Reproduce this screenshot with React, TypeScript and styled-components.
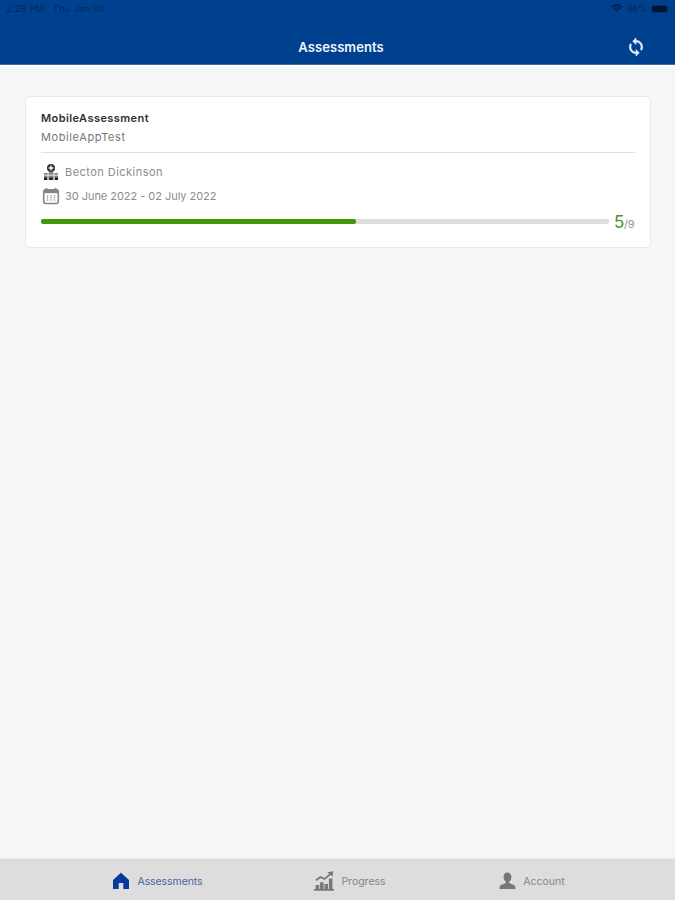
import React from "react";
import styled, { createGlobalStyle } from "styled-components";

const GlobalStyle = createGlobalStyle`
  * { box-sizing: border-box; }
  body { margin: 0; font-family: Inter, "Liberation Sans", sans-serif; }
`;

const Screen = styled.div`
  display: flex;
  flex-direction: column;
  width: 675px;
  height: 900px;
  overflow: hidden;
  background: #f6f6f6;
`;

const Header = styled.header`
  height: 65px;
  flex: none;
  background: #00418f;
  border-bottom: 1px solid #4b67a8;
`;

const StatusBar = styled.div`
  display: grid;
  grid-template-columns: 1fr auto 1fr;
  align-items: center;
  height: 17px;
  padding: 0 5px 0 6px;
  color: #032759;
  font-size: 9px;
  line-height: 17px;
`;

const Clock = styled.div`
  display: flex;
  gap: 9px;
  letter-spacing: 0.35px;
`;

const Dots = styled.div`
  display: flex;
  gap: 5px;
  i { width: 2px; height: 2px; border-radius: 50%; background: #043a7e; }
`;

const Indicators = styled.div`
  display: flex;
  justify-content: flex-end;
  align-items: center;
  gap: 4px;
`;

const TitleBar = styled.div`
  display: grid;
  grid-template-columns: 1fr auto 1fr;
  align-items: center;
  height: 47px;
  padding: 13px 29px 0 36px;
`;

const Title = styled.h1`
  grid-column: 2;
  margin: 0;
  color: #f2f6ff;
  font-size: 13px;
  font-weight: 600;
  line-height: 20px;
  letter-spacing: 0.08px;
`;

const SyncButton = styled.button`
  justify-self: end;
  display: flex;
  padding: 0;
  border: 0;
  background: none;
  color: #e8f0fc;
`;

const Main = styled.main`
  flex: 1;
  padding: 29px 24px 0 25px;
  border-top: 2px solid #fdfdfe;
`;

const Card = styled.article`
  height: 152px;
  padding: 12px 15px 0;
  border: 1px solid #e9e9e9;
  border-radius: 4px;
  background: #fff;
`;

const CardTitle = styled.h2`
  margin: 0;
  color: #303030;
  font-size: 11px;
  font-weight: 600;
  line-height: 18px;
  letter-spacing: 0.42px;
`;

const Subtitle = styled.div`
  height: 26px;
  padding-top: 1px;
  margin-bottom: 7px;
  border-bottom: 1px solid #dfdfdf;
  color: #777;
  font-size: 11px;
  line-height: 18px;
  letter-spacing: 0.6px;
`;

const Detail = styled.div<{ $spacing: number }>`
  display: flex;
  align-items: center;
  gap: 5px;
  height: 24px;
  padding-left: 1px;
  color: #8c8c8c;
  font-size: 11px;
  letter-spacing: ${(p) => p.$spacing}px;
`;

const ProgressRow = styled.div`
  display: flex;
  align-items: center;
  gap: 5px;
  height: 27px;
`;

const Track = styled.div`
  flex: none;
  width: 568px;
  height: 5px;
  border-radius: 2px;
  background: #dedede;
`;

const Fill = styled.div`
  width: 55.5%;
  height: 100%;
  border-radius: 2px;
  background: #46960d;
`;

const Score = styled.div`
  display: flex;
  align-items: baseline;
  padding-top: 2px;
  color: #929292;
  font-size: 11px;
  line-height: 20px;
  letter-spacing: -0.3px;
  b { color: #4b9021; font-size: 17px; font-weight: 400; }
`;

const TabBar = styled.nav`
  display: flex;
  flex: none;
  height: 42px;
  padding: 2px 0 0 66px;
  border-top: 1px solid #e8e8e8;
  background: #dddddd;
`;

const Tab = styled.a<{ $active?: boolean; $width: number }>`
  display: flex;
  align-items: center;
  justify-content: center;
  gap: 7px;
  width: ${(p) => p.$width}px;
  color: ${(p) => (p.$active ? "#5260a0" : "#858585")};
  font-size: 10.5px;
  letter-spacing: ${(p) => (p.$active ? -0.08 : 0)}px;
  span { padding-top: 2px; }
  svg { color: ${(p) => (p.$active ? "#073b9b" : "#777")}; }
`;

const WifiIcon = () => (
  <svg width="12" height="9" viewBox="0 0 12 9" fill="none" stroke="#032350" strokeWidth="1.8">
    <path d="M.7 3.2Q6-1.3 11.3 3.2M2.8 5.2Q6 2.6 9.2 5.2" />
    <path d="M4.3 6.4Q6 5.1 7.7 6.4L6 8.3Z" fill="#032350" stroke="none" />
  </svg>
);

const BatteryIcon = () => (
  <svg width="19" height="8" viewBox="0 0 19 8">
    <rect x=".5" y=".5" width="16" height="7" rx="2" fill="#001333" stroke="#07336d" />
    <path d="M17.5 2.5q1.2 1.5 0 3" fill="#032759" />
  </svg>
);

const SyncIcon = () => (
  <svg width="20" height="20" viewBox="0 0 24 24" fill="currentColor">
    <path d="M12 4V1L8 5l4 4V6c3.31 0 6 2.69 6 6 0 1.01-.25 1.97-.7 2.8l1.46 1.46A7.93 7.93 0 0 0 20 12c0-4.42-3.58-8-8-8zm0 14c-3.31 0-6-2.69-6-6 0-1.01.25-1.97.7-2.8L5.24 7.74A7.93 7.93 0 0 0 4 12c0 4.42 3.58 8 8 8v3l4-4-4-4v3z" stroke="currentColor" strokeWidth=".6" />
  </svg>
);

const HospitalIcon = () => (
  <svg width="18" height="18" viewBox="0 0 18 18">
    <circle cx="9" cy="5" r="4" fill="#303030" />
    <path d="M9 2.6v4.8M6.6 5h4.8" stroke="#fff" strokeWidth="1.3" />
    <path d="M2 10h5V9h4v1h5v7H2z" fill="#858585" />
    <path d="M2 12.2h14M6 10v7M12 10v7" stroke="#eee" strokeWidth=".9" />
    <path d="M2 14.5h3V17H2zM7.3 14.5h3.4V17H7.3zM13 14.5h3V17h-3z" fill="#202020" />
  </svg>
);

const CalendarIcon = () => (
  <svg width="18" height="18" viewBox="0 0 18 18" fill="none" stroke="#858585">
    <rect x="1.7" y="2.8" width="14.6" height="13.7" rx="2" strokeWidth="1.6" />
    <path d="M2 4.5h14" strokeWidth="3.4" />
    <path d="M4.5 1v3M13.5 1v3" strokeWidth="1.8" />
    <path d="M5.5 8v6M9 8v6M12.5 8v6" stroke="#a5a5a5" strokeWidth="1.4" strokeDasharray="1.5 .6" />
  </svg>
);

const HomeIcon = () => (
  <svg width="18" height="18" viewBox="0 0 18 18" fill="currentColor">
    <path d="M9 .8 17 8v9h-5.7v-6H6.7v6H1V8z" />
  </svg>
);

const ChartIcon = () => (
  <svg width="20" height="20" viewBox="0 0 20 20" fill="currentColor">
    <path d="M0 18h20v1.7H0zM1.7 14h3.5v5H1.7zM6.1 11.3h3.5V19H6.1zM10.5 13h3.5v6h-3.5zM14.9 7.5h3.5V19h-3.5z" />
    <path d="M2 9.3 6.5 6l4 2L16.5 2.8" fill="none" stroke="currentColor" strokeWidth="1.7" />
    <path d="m13.5 1.2 5.7-.9-.7 5.5z" />
  </svg>
);

const PersonIcon = () => (
  <svg width="17" height="18" viewBox="0 0 17 18" fill="currentColor">
    <path d="M8.5.6C6 .6 4.6 2.4 4.6 5c0 2.1.9 3.9 2.2 4.8v1.3L2 13C.8 13.6.5 14.8.5 17h16c0-2.2-.4-3.4-1.6-4l-4.7-1.9V9.8c1.3-.9 2.2-2.7 2.2-4.8C12.4 2.4 11 .6 8.5.6z" />
  </svg>
);

export default function App() {
  return (
    <Screen>
      <GlobalStyle />
      <Header>
        <StatusBar>
          <Clock><span>2:28 PM</span><span>Thu Jan 30</span></Clock>
          <Dots><i /><i /><i /></Dots>
          <Indicators><WifiIcon /><span>96%</span><BatteryIcon /></Indicators>
        </StatusBar>
        <TitleBar>
          <Title>Assessments</Title>
          <SyncButton aria-label="Sync"><SyncIcon /></SyncButton>
        </TitleBar>
      </Header>
      <Main>
        <Card>
          <CardTitle>MobileAssessment</CardTitle>
          <Subtitle>MobileAppTest</Subtitle>
          <Detail $spacing={0.46}><HospitalIcon />Becton Dickinson</Detail>
          <Detail $spacing={-0.04}><CalendarIcon />30 June 2022 - 02 July 2022</Detail>
          <ProgressRow>
            <Track><Fill /></Track>
            <Score><b>5</b>/9</Score>
          </ProgressRow>
        </Card>
      </Main>
      <TabBar>
        <Tab $active $width={183}><HomeIcon /><span>Assessments</span></Tab>
        <Tab $width={202}><ChartIcon /><span>Progress</span></Tab>
        <Tab $width={162}><PersonIcon /><span>Account</span></Tab>
      </TabBar>
    </Screen>
  );
}
